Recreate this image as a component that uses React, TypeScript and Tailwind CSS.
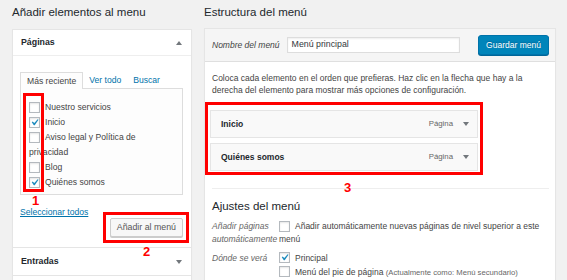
import React from "react";

function Cb({ checked = false }: { checked?: boolean }) {
  return (
    <span className="relative inline-block align-middle w-[11px] h-[11px] border border-[#b4b9be] bg-white shadow-[inset_0_1px_2px_rgba(0,0,0,0.1)] mr-[5px] -mt-[1px]">
      {checked && (
        <svg viewBox="0 0 20 20" className="absolute -left-[2px] -top-[2px] w-[13px] h-[13px]">
          <path d="M14.83 4.89l1.34.94-5.81 8.38H9.02L5.78 9.67l1.34-1.25 2.57 2.4z" fill="#1e8cbe" />
        </svg>
      )}
    </span>
  );
}

function Tri({ up = false }: { up?: boolean }) {
  return (
    <svg width="6" height="4" viewBox="0 0 6 4">
      <polygon points={up ? "0,4 6,4 3,0" : "0,0 6,0 3,4"} fill="#72777c" />
    </svg>
  );
}

function MenuItem({ title }: { title: string }) {
  return (
    <div className="h-[28px] border border-[#e5e5e5] bg-[#f9f9f9] flex items-center justify-between pl-[10px] pr-[8px]">
      <span className="font-bold text-[8.5px] text-[#23282d]">{title}</span>
      <span className="flex items-center gap-[10px]">
        <span className="text-[7.8px] text-[#666]">Página</span>
        <Tri />
      </span>
    </div>
  );
}

export default function App() {
  const pages: { label: string; checked: boolean }[] = [
    { label: "Nuestro servicios", checked: false },
    { label: "Inicio", checked: true },
    { label: "Aviso legal y Política de privacidad", checked: false },
    { label: "Blog", checked: false },
    { label: "Quiénes somos", checked: true },
  ];
  return (
    <div className="relative w-[567px] h-[280px] overflow-hidden bg-[#f1f1f1] font-['Liberation_Sans',Arial,sans-serif] text-[#444] flex pl-[12px] gap-[12px]">
      {/* Left column */}
      <div className="w-[180px] flex flex-col shrink-0">
        <h2 className="shrink-0 h-[28px] leading-[25px] text-[11.5px] text-[#23282d]">Añadir elementos al menu</h2>
        <div className="shrink-0 mt-[1px] border border-[#e5e5e5] bg-white shadow-[0_1px_1px_rgba(0,0,0,0.04)] flex flex-col">
          <div className="h-[26px] border-b border-[#eee] flex items-center justify-between pl-[8px] pr-[9px]">
            <span className="font-bold text-[8.8px] text-[#23282d]">Páginas</span>
            <Tri up />
          </div>
          <div className="pl-[7px] pr-[8px] pt-[16px] pb-[10px] flex flex-col">
            <div className="flex items-end h-[16px] text-[8.6px]">
              <span className="relative z-10 h-[17px] -mb-[1px] border-t border-x border-[#ddd] bg-[#fdfdfd] px-[6px] leading-[17px]">Más reciente</span>
              <span className="h-[17px] -mb-[1px] px-[6px] leading-[17px] text-[#0073aa]">Ver todo</span>
              <span className="h-[17px] -mb-[1px] px-[6px] leading-[17px] text-[#0073aa]">Buscar</span>
            </div>
            <div className="h-[107px] border border-[#ddd] bg-[#fdfdfd] pt-[11px] pl-[8px] pr-[12px]">
              {pages.map((p) => (
                <label key={p.label} className="block leading-[15px] text-[8.6px]">
                  <Cb checked={p.checked} />
                  {p.label}
                </label>
              ))}
            </div>
            <span className="mt-[12px] leading-[10px] text-[8.6px] text-[#0073aa] underline self-start">Seleccionar todos</span>
            <div className="mt-[1px] flex justify-end">
              <button className="h-[19px] px-[6px] border border-[#ccc] bg-[#f7f7f7] rounded-[2px] text-[#555] text-[8.8px] shadow-[0_1px_0_#ccc]">Añadir al menú</button>
            </div>
          </div>
          <div className="h-[28px] border-t border-[#e5e5e5] flex items-center justify-between pl-[8px] pr-[9px]">
            <span className="font-bold text-[8.8px] text-[#23282d]">Entradas</span>
            <Tri />
          </div>
          <div className="h-[28px] border-t border-[#e5e5e5]" />
        </div>
      </div>

      {/* Right column */}
      <div className="w-[352px] flex flex-col shrink-0">
        <h2 className="shrink-0 h-[28px] leading-[25px] text-[11.5px] text-[#23282d]">Estructura del menú</h2>
        <div className="border border-[#e5e5e5] bg-white shadow-[0_1px_1px_rgba(0,0,0,0.04)] flex flex-col flex-1">
          <div className="shrink-0 h-[33px] bg-[#f5f5f5] border-b border-[#dfdfdf] flex items-center pl-[7px] pr-[6px]">
            <span className="italic text-[8.5px] text-[#444]">Nombre del menú</span>
            <div className="ml-[7px] w-[173px] h-[16px] border border-[#ddd] bg-white shadow-[inset_0_1px_2px_rgba(0,0,0,0.07)] flex items-center pl-[4px] text-[8.8px] text-[#32373c]">Menú principal</div>
            <button className="ml-auto h-[20px] w-[71px] bg-[#0085ba] border border-[#0073aa] rounded-[3px] text-white text-[8.5px] shadow-[0_1px_0_#006799] [text-shadow:0_-1px_1px_#006799]">Guardar menú</button>
          </div>
          <div className="pl-[7px] pr-[6px] flex flex-col">
            <p className="mt-[9.5px] text-[8.5px] leading-[12.6px]">
              Coloca cada elemento en el orden que prefieras. Haz clic en la flecha que hay a la derecha del elemento para mostrar más opciones de configuración.
            </p>
            <div className="mt-[13.5px] -ml-[2px] w-[268px] flex flex-col gap-[5px]">
              <MenuItem title="Inicio" />
              <MenuItem title="Quiénes somos" />
            </div>
            <div className="mt-[17px] border-t border-[#eee]" />
            <h3 className="mt-[10px] leading-[14px] text-[11.5px] text-[#23282d]">Ajustes del menú</h3>
            <div className="mt-[7px] grid grid-cols-[67px_1fr] text-[8.5px]">
              <div className="italic text-[#666] leading-[12.7px]">Añadir páginas automáticamente</div>
              <label className="leading-[12.7px]">
                <Cb />
                Añadir automáticamente nuevas páginas de nivel superior a este menú
              </label>
              <div className="mt-[5px] italic text-[#666] leading-[14px]">Dónde se verá</div>
              <div className="mt-[5px] flex flex-col">
                <label className="leading-[14px]">
                  <Cb checked />
                  Principal
                </label>
                <label className="leading-[14px]">
                  <Cb />
                  Menú del pie de página <span className="text-[7.7px] text-[#666]">(Actualmente como: Menú secundario)</span>
                </label>
              </div>
            </div>
          </div>
        </div>
      </div>

      {/* Annotations */}
      <div className="absolute left-[23px] top-[93px] w-[21px] h-[99px] border-[3px] border-[#ff0000]" />
      <div className="absolute left-[103px] top-[212px] w-[86px] h-[31px] border-[3px] border-[#ff0000]" />
      <div className="absolute left-[205px] top-[102px] w-[278px] h-[73px] border-[3px] border-[#ff0000]" />
      <span className="absolute left-[32px] top-[196px] text-[13px] leading-[10px] font-bold text-[#ff0000]">1</span>
      <span className="absolute left-[143px] top-[246px] text-[13px] leading-[11px] font-bold text-[#ff0000]">2</span>
      <span className="absolute left-[344px] top-[182px] text-[13px] leading-[11px] font-bold text-[#ff0000]">3</span>
    </div>
  );
}
